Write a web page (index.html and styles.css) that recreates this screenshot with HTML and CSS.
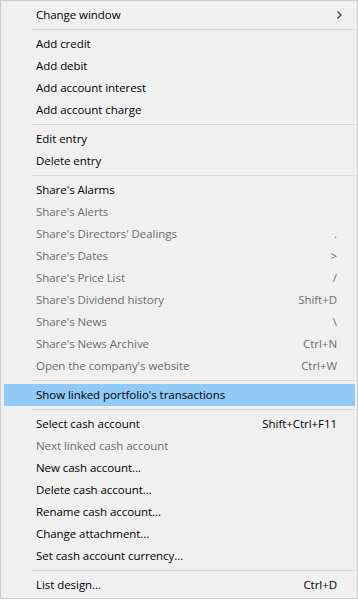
FILE: index.html
```html
<!DOCTYPE html>
<html lang="en">
<head>
    <meta charset="UTF-8" />
    <title>Context menu</title>
    <link rel="stylesheet" href="styles.css">
</head>
<body>
<div class="menu">
    <div class="item">
        <span class="label">Change window</span>
        <svg class="arrow" width="5" height="8" viewBox="0 0 5 8"><path d="M0.5 0.5 L4 4 L0.5 7.5" fill="none" stroke="#333" stroke-width="1.1"/></svg>
    </div>
    <div class="sep"></div>
    <div class="item"><span class="label">Add credit</span></div>
    <div class="item"><span class="label">Add debit</span></div>
    <div class="item"><span class="label">Add account interest</span></div>
    <div class="item"><span class="label">Add account charge</span></div>
    <div class="sep"></div>
    <div class="item"><span class="label">Edit entry</span></div>
    <div class="item"><span class="label">Delete entry</span></div>
    <div class="sep"></div>
    <div class="item"><span class="label">Share's Alarms</span></div>
    <div class="item disabled"><span class="label">Share's Alerts</span></div>
    <div class="item disabled"><span class="label">Share's Directors' Dealings</span><span class="key">.</span></div>
    <div class="item disabled"><span class="label">Share's Dates</span><span class="key">&gt;</span></div>
    <div class="item disabled"><span class="label">Share's Price List</span><span class="key">/</span></div>
    <div class="item disabled"><span class="label">Share's Dividend history</span><span class="key">Shift+D</span></div>
    <div class="item disabled"><span class="label">Share's News</span><span class="key">\</span></div>
    <div class="item disabled"><span class="label">Share's News Archive</span><span class="key">Ctrl+N</span></div>
    <div class="item disabled"><span class="label">Open the company's website</span><span class="key">Ctrl+W</span></div>
    <div class="sep"></div>
    <div class="item active"><span class="label">Show linked portfolio's transactions</span></div>
    <div class="sep"></div>
    <div class="item"><span class="label">Select cash account</span><span class="key">Shift+Ctrl+F11</span></div>
    <div class="item disabled"><span class="label">Next linked cash account</span></div>
    <div class="item"><span class="label">New cash account...</span></div>
    <div class="item"><span class="label">Delete cash account...</span></div>
    <div class="item"><span class="label">Rename cash account...</span></div>
    <div class="item"><span class="label">Change attachment...</span></div>
    <div class="item"><span class="label">Set cash account currency...</span></div>
    <div class="sep"></div>
    <div class="item"><span class="label">List design...</span><span class="key">Ctrl+D</span></div>
</div>
</body>
</html>
```

FILE: styles.css
```css
body {
    margin: 0;
    background: #fff;
    font-family: 'Open Sans', 'Noto Sans', sans-serif;
    font-size: 11.5px;
    letter-spacing: -0.05px;
}
.menu {
    width: 351px;
    padding: 3px 2px 2px 3px;
    background: #f0f0f0;
    border: 1px solid #cccccc;
    box-shadow: 2px 2px 1px rgba(0, 0, 0, 0.45);
}
.item {
    display: flex;
    align-items: center;
    box-sizing: border-box;
    height: 22px;
    padding: 0 18px 1px 32px;
    color: #000;
    white-space: nowrap;
}
.item .label {
    flex: 1;
}
.item.disabled {
    color: #6d6d6d;
}
.item.active {
    background: #91c9f7;
}
.arrow {
    margin-right: -5px;
}
.sep {
    height: 1px;
    margin: 3px 0 3px 28px;
    background: #d7d7d7;
}
```
